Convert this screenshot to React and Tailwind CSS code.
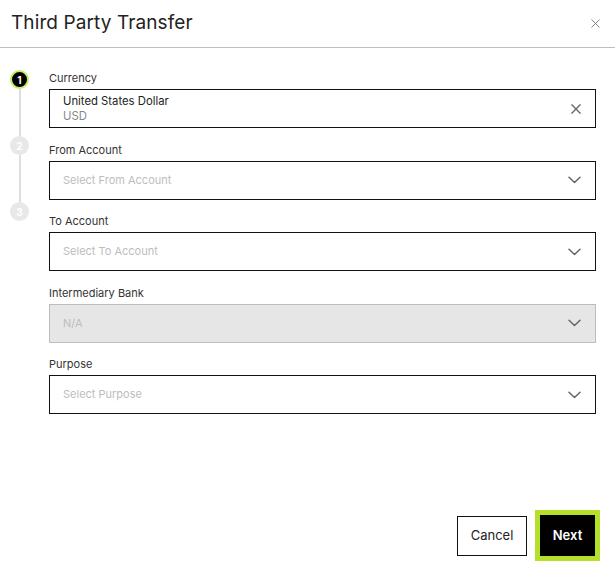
import React from "react";

const Chevron = () => (
  <svg width="13" height="8" viewBox="0 0 13 8" fill="none" className="shrink-0">
    <path d="M1 1.2L6.5 6.5L12 1.2" stroke="#666" strokeWidth="1.5" strokeLinecap="round" strokeLinejoin="round" />
  </svg>
);

const XIcon = ({ size = 11, color = "#666", sw = 1.6 }) => (
  <svg width={size} height={size} viewBox="0 0 12 12" fill="none" className="shrink-0">
    <path d="M1 1L11 11M11 1L1 11" stroke={color} strokeWidth={sw} strokeLinecap="round" />
  </svg>
);

function Field({ label, children, disabled }) {
  return (
    <div className="flex flex-col">
      <div className="text-[11px] leading-[16px] text-[#333] mb-[3px]">{label}</div>
      <div
        className={
          "h-[39px] flex items-center justify-between pl-[13px] pr-[14px] border " +
          (disabled ? "bg-[#e6e6e6] border-[#bdbdbd]" : "bg-white border-[#111]")
        }
      >
        {children}
      </div>
    </div>
  );
}

function Placeholder({ text }) {
  return <span className="text-[11px] text-[#bdbdbd]">{text}</span>;
}

export default function App() {
  return (
    <div
      className="w-[615px] h-[566px] bg-white flex flex-col overflow-hidden"
      style={{ fontFamily: "Inter, 'Noto Sans', sans-serif" }}
    >
      <div className="h-[48px] shrink-0 flex items-center justify-between pl-[11px] pr-[15px] border-b border-[#bdbdbd]">
        <div className="text-[19px] text-[#222] tracking-[0.1px]">Third Party Transfer</div>
        <XIcon size={9} color="#777" sw={1.2} />
      </div>

      <div className="flex flex-1 pt-[22px]">
        <div className="w-[49px] shrink-0 flex flex-col items-start pl-[10px] pt-[0px]">
          <div className="w-[19px] h-[19px] rounded-full bg-black border-2 border-[#c3ec6a] flex items-center justify-center text-white text-[10px] font-bold leading-none">
            1
          </div>
          <div className="w-[1.5px] h-[47px] bg-[#dedede] ml-[9px]" />
          <div className="w-[19px] h-[19px] rounded-full bg-[#e8e8e8] flex items-center justify-center text-white text-[10px] font-bold leading-none">
            2
          </div>
          <div className="w-[1.5px] h-[47px] bg-[#dedede] ml-[9px]" />
          <div className="w-[19px] h-[19px] rounded-full bg-[#e8e8e8] flex items-center justify-center text-white text-[10px] font-bold leading-none">
            3
          </div>
        </div>

        <div className="flex-1 mr-[19px] flex flex-col">
          <div className="flex flex-col gap-[13.5px]">
            <Field label="Currency">
              <div className="flex flex-col leading-[15px]">
                <span className="text-[11.3px] text-[#222]">United States Dollar</span>
                <span className="text-[11.3px] text-[#888]">USD</span>
              </div>
              <XIcon size={10} color="#666" sw={1.6} />
            </Field>
            <Field label="From Account">
              <Placeholder text="Select From Account" />
              <Chevron />
            </Field>
            <Field label="To Account">
              <Placeholder text="Select To Account" />
              <Chevron />
            </Field>
            <Field label="Intermediary Bank" disabled>
              <Placeholder text="N/A" />
              <Chevron />
            </Field>
            <Field label="Purpose">
              <Placeholder text="Select Purpose" />
              <Chevron />
            </Field>
          </div>
        </div>
      </div>

      <div className="flex items-center justify-end gap-[8px] pr-[15px] pb-[5px]">
        <button className="w-[70px] h-[40px] border border-[#111] bg-white text-[13px] text-[#222]">
          Cancel
        </button>
        <button className="w-[65px] h-[51px] border-[5px] border-[#b5e02a] bg-black text-white text-[13px] font-semibold">
          Next
        </button>
      </div>
    </div>
  );
}
